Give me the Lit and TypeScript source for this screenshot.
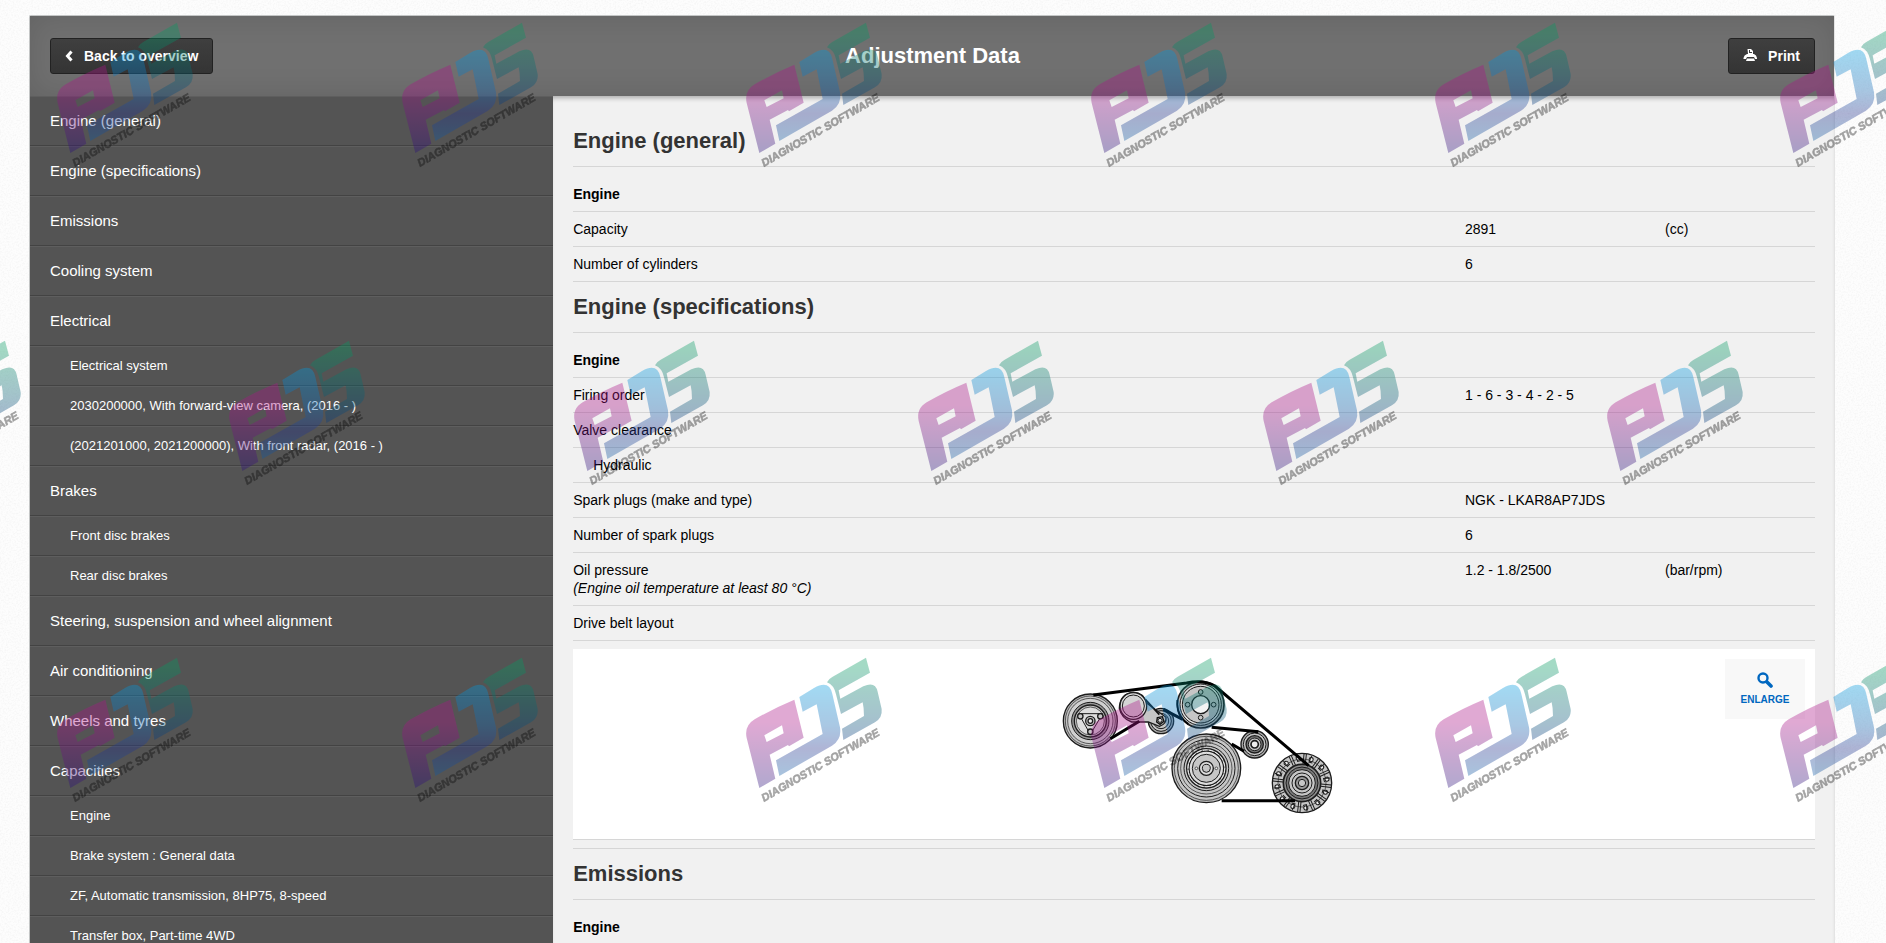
import { LitElement, html, svg, css } from "lit";
import { customElement } from "lit/decorators.js";

type Row = { label: string; value?: string; unit?: string; note?: string; indent?: boolean };

const NAV: { label: string; children?: string[] }[] = [
  { label: "Engine (general)" },
  { label: "Engine (specifications)" },
  { label: "Emissions" },
  { label: "Cooling system" },
  {
    label: "Electrical",
    children: [
      "Electrical system",
      "2030200000, With forward-view camera, (2016 - )",
      "(2021201000, 2021200000), With front radar, (2016 - )",
    ],
  },
  { label: "Brakes", children: ["Front disc brakes", "Rear disc brakes"] },
  { label: "Steering, suspension and wheel alignment" },
  { label: "Air conditioning" },
  { label: "Wheels and tyres" },
  {
    label: "Capacities",
    children: [
      "Engine",
      "Brake system : General data",
      "ZF, Automatic transmission, 8HP75, 8-speed",
      "Transfer box, Part-time 4WD",
    ],
  },
];

const GENERAL: Row[] = [
  { label: "Capacity", value: "2891", unit: "(cc)" },
  { label: "Number of cylinders", value: "6" },
];

const SPECS: Row[] = [
  { label: "Firing order", value: "1 - 6 - 3 - 4 - 2 - 5" },
  { label: "Valve clearance" },
  { label: "Hydraulic", indent: true },
  { label: "Spark plugs (make and type)", value: "NGK - LKAR8AP7JDS" },
  { label: "Number of spark plugs", value: "6" },
  { label: "Oil pressure", value: "1.2 - 1.8/2500", unit: "(bar/rpm)", note: "(Engine oil temperature at least 80 °C)" },
  { label: "Drive belt layout" },
];

@customElement("brand-watermark")
class BrandWatermark extends LitElement {
  static styles = css`
    :host {
      position: absolute;
      inset: 0;
      overflow: hidden;
      pointer-events: none;
    }
    .canvas {
      display: block;
      width: 100%;
      height: 100%;
      opacity: 0.36;
    }
    .tagline {
      font: italic bold 11px "Liberation Sans", Arial, sans-serif;
      stroke: #000;
      stroke-width: 0.6px;
    }
  `;

  render() {
    const marks = [0, 1, 2].flatMap((row) =>
      [0, 1, 2, 3, 4, 5].map((col) => ({
        x: Math.round(57 + (col - (row % 2) / 2) * 344.5),
        y: Math.round(23 + row * 317.5),
      })),
    );
    return html`<svg class="canvas" aria-hidden="true">
      <defs>
        <linearGradient id="p" x2="0" y2="1"><stop offset=".25" stop-color="#ac1488"/><stop offset="1" stop-color="#28107a"/></linearGradient>
        <linearGradient id="d" x2="0" y2="1"><stop stop-color="#009be0"/><stop offset=".45" stop-color="#1468b4"/><stop offset=".7" stop-color="#24348e"/><stop offset="1" stop-color="#105ca4"/></linearGradient>
        <linearGradient id="s" x2="0" y2="1"><stop offset=".1" stop-color="#069b62"/><stop offset="1" stop-color="#0a3c80"/></linearGradient>
      </defs>
      ${marks.map(
        (m) => svg`<g transform="translate(${m.x} ${m.y})">
          <g transform="scale(.3333) translate(-50 -56)">
            <path fill="url(#p)" fill-rule="evenodd" d="M195 181L223 295L179 321L176 317L121 346L138 418L90 446L52 296Q44 259 76 240Q130 208 195 181ZM105 288L112 308L163 282L158 258Z"/>
            <path fill="url(#d)" d="M210 173L254 146Q300 120 309 164L332 264Q338 300 308 319L150 410L140 363L280 284L262 195L220 217Z"/>
            <path fill="url(#s)" d="M293 129Q298 118 310 112L410 55L422 100L328 153L333 178L402 141Q438 124 445 157L457 209Q460 235 437 249L342 302L338 268L404 230Q404 205 400 189L335 224L320 165Q314 137 293 129Z"/>
          </g>
          <text class="tagline" transform="translate(18 144) rotate(-30)">DIAGNOSTIC SOFTWARE</text>
        </g>`,
      )}
    </svg>`;
  }
}

@customElement("belt-diagram")
class BeltDiagram extends LitElement {
  static styles = css`
    :host {
      display: block;
    }
    .drawing {
      display: block;
      width: 320px;
      height: 190px;
    }
  `;

  ring(cx: number, cy: number, rings: [number, string, number][]) {
    return rings.map(
      ([r, fill, w]) => svg`<circle cx=${cx} cy=${cy} r=${r} fill=${fill} stroke="#1c1c1c" stroke-width=${w}/>`,
    );
  }

  render() {
    const g = "#c6c6c6";
    const spokes = Array.from({ length: 12 }, (_, i) => i * 30 + 6);
    return html`<svg class="drawing" viewBox="-18 27 960 570" role="img" aria-label="Drive belt layout">
      ${this.ring(786, 429, [[89, g, 4], [72, g, 2]])}
      ${spokes.map(
        (a) => svg`<g transform="rotate(${a} 786 429)" stroke="#1c1c1c" stroke-width="3" fill="#eee">
          <path d="M783 341V372M790 341V372"/><circle cx="806" cy="356" r="6"/><path d="M762 346L766 366L776 362" fill="none"/></g>`,
      )}
      ${this.ring(786, 429, [[56, "#8e8e8e", 5], [48, "#777", 3], [40, g, 3], [30, g, 3], [20, "#999", 4], [11, g, 3]])}
      ${this.ring(499, 385, [[103, "#bbb", 4], [96, g, 2], [86, g, 3], [77, g, 2], [67, g, 3], [59, g, 4], [52, "#ddd", 4], [42, g, 3], [21, "#ddd", 4], [12, g, 3]])}
      <circle cx="499" cy="385" r="55" fill="none" stroke="#eee" stroke-width="3" stroke-dasharray="14 5"/>
      ${this.ring(469, 385, [[4, "#eee", 2]])}${this.ring(529, 385, [[4, "#eee", 2]])}
      ${this.ring(644, 313, [[41, "#aaa", 4], [34, g, 3], [26, "#777", 4], [19, g, 3], [11, "#eee", 5]])}
      ${this.ring(363, 243, [[38, "#aaa", 4], [31, g, 3], [23, g, 3]])}
      <path d="M238 205Q240 160 280 157Q312 158 318 188L378 232Q380 252 358 259L325 246H275Q245 236 238 205Z" fill=${g} stroke="#1c1c1c" stroke-width="4"/>
      <path d="M316 178L358 224" stroke="#111" stroke-width="5"/>
      ${this.ring(280, 198, [[40, "#ddd", 4], [33, "#d4d4d4", 3]])}
      <path d="M352 233L367 230L372 244L360 253L350 246Z" fill="#aaa" stroke="#111" stroke-width="4"/>
      ${this.ring(360, 241, [[6, "#ddd", 3]])}
      ${this.ring(151, 243, [[81, "#bbb", 4], [75, g, 2], [68, "#d0d0d0", 2], [56, "#999", 3], [48, g, 4], [42, "#ddd", 2]])}
      <path d="M116 221H188L151 283Z" fill="#ddd" stroke="#1c1c1c" stroke-width="3"/>
      ${this.ring(121, 229, [[8, g, 4]])}${this.ring(181, 229, [[8, g, 4]])}${this.ring(151, 275, [[8, g, 4]])}
      ${this.ring(151, 243, [[14, g, 4], [7, "#eee", 4]])}
      ${this.ring(482, 194, [[70, "#bbb", 5], [62, "#ddd", 3], [55, g, 3], [27, "#f3f3f3", 4]])}
      ${this.ring(482, 156, [[7, g, 3]])}${this.ring(482, 233, [[7, g, 3]])}${this.ring(443, 194, [[7, g, 3]])}${this.ring(521, 194, [[7, g, 3]])}
      <path d="M160 165L440 129Q490 118 525 138L806 377M370 208L428 238M515 262L655 275M575 312L612 334M545 482H765M211 296L298 244" fill="none" stroke="#000" stroke-width="9"/>
      <path d="M412 180Q408 226 445 252" fill="none" stroke="#000" stroke-width="5"/>
    </svg>`;
  }
}

@customElement("app-root")
class AppRoot extends LitElement {
  static styles = css`
    :host {
      display: block;
      position: relative;
      box-sizing: border-box;
      height: 100vh;
      overflow: hidden;
      padding: 15px 51px 0 29px;
      background: #fdfdfd;
      font: 14px/18px "Liberation Sans", Arial, sans-serif;
      color: #000;
    }
    .grain {
      position: absolute;
      inset: 0;
      width: 100%;
      height: 100%;
    }
    .shell {
      position: relative;
      border: 1px solid #c4c6c6;
      border-right-color: #e4e4e4;
      background: #f1f1f1;
      border-radius: 2px 2px 0 0;
    }
    .bar {
      position: relative;
      display: grid;
      grid-template-columns: 1fr auto 1fr;
      align-items: center;
      height: 80px;
      padding: 0 19px 0 20px;
      box-sizing: border-box;
      background: #707070;
      box-shadow: inset 0 0 30px rgba(0, 0, 0, 0.12);
    }
    .title {
      margin: 0;
      font-size: 22px;
      line-height: 28px;
      color: #fff;
    }
    .btn {
      display: flex;
      align-items: center;
      gap: 10px;
      height: 36px;
      padding: 0 14px;
      border: 1px solid #222;
      border-radius: 3px;
      background: linear-gradient(#3f3f3f, #343434);
      color: #fff;
      font: bold 14px/18px "Liberation Sans", Arial, sans-serif;
      justify-self: start;
    }
    .btn.print {
      justify-self: end;
    }
    .body {
      display: grid;
      grid-template-columns: 29% 1fr;
    }
    .nav {
      background: #545454;
    }
    .list {
      margin: 0;
      padding: 0;
      list-style: none;
    }
    .link {
      display: block;
      box-sizing: border-box;
      height: 50px;
      padding: 0 20px;
      border-top: 1px solid #5e5e5e;
      border-bottom: 1px solid #434343;
      color: #fff;
      font-size: 15px;
      line-height: 48px;
      text-decoration: none;
    }
    .link.sub {
      height: 40px;
      padding-left: 40px;
      font-size: 13px;
      line-height: 38px;
    }
    .content {
      padding: 20px 19px 0 20px;
      box-shadow: inset 0 5px 5px -3px rgba(0, 0, 0, 0.3);
    }
    .heading {
      margin: 0;
      padding: 11px 0;
      border-bottom: 1px solid #d6d6d6;
      font-size: 22px;
      line-height: 28px;
      color: #333;
    }
    .data {
      width: 100%;
      table-layout: fixed;
      border-collapse: separate;
      border-spacing: 0;
    }
    .value,
    .unit {
      width: 200px;
    }
    .unit {
      width: 150px;
    }
    .cell {
      padding: 8px 0;
      border-bottom: 1px solid #d6d6d6;
      text-align: left;
      vertical-align: top;
      font-weight: normal;
    }
    .cell.group {
      padding: 18px 0 8px;
      font-weight: bold;
    }
    .cell.indent {
      padding-left: 20px;
    }
    .note {
      display: block;
      font-style: italic;
    }
    .figure {
      position: relative;
      display: flex;
      justify-content: center;
      border-bottom: 1px solid #d6d6d6;
      background: #fff;
    }
    .enlarge {
      position: absolute;
      top: 10px;
      right: 10px;
      display: flex;
      flex-direction: column;
      align-items: center;
      justify-content: center;
      gap: 6px;
      width: 80px;
      height: 60px;
      padding: 0;
      border: 0;
      background: #f8f8f8;
      color: #0067c0;
      font: bold 10px/12px "Liberation Sans", Arial, sans-serif;
    }
  `;

  cells(r: Row) {
    return html`<tr>
      <th scope="row" class="cell ${r.indent ? "indent" : ""}">${r.label}${r.note ? html`<span class="note">${r.note}</span>` : ""}</th>
      <td class="cell">${r.value ?? ""}</td>
      <td class="cell">${r.unit ?? ""}</td>
    </tr>`;
  }

  section(id: string, title: string, rows: Row[], figure: unknown = "") {
    return html`<section id=${id}>
      <h2 class="heading">${title}</h2>
      <table class="data" aria-label=${title}>
        <colgroup><col /><col class="value" /><col class="unit" /></colgroup>
        <tbody>
          <tr><th class="cell group" colspan="3">Engine</th></tr>
          ${rows.map((r) => this.cells(r))} ${figure}
        </tbody>
      </table>
    </section>`;
  }

  render() {
    const figure = html`<tr>
      <td class="cell" colspan="3">
        <div class="figure">
          <belt-diagram></belt-diagram>
          <button class="enlarge" type="button">
            <svg width="16" height="16" viewBox="0 0 16 16" fill="none" stroke="#0067c0" aria-hidden="true">
              <circle cx="6" cy="6" r="4.5" stroke-width="2.4" />
              <path d="M10 10L14 14" stroke-width="3.6" stroke-linecap="round" />
            </svg>
            ENLARGE
          </button>
        </div>
      </td>
    </tr>`;
    return html`
      <svg class="grain" aria-hidden="true">
        <filter id="noise"><feTurbulence type="fractalNoise" baseFrequency=".6" numOctaves="2" /><feColorMatrix values="0 0 0 0 .8  0 0 0 0 .8  0 0 0 0 .8  .8 0 0 0 -.33" /></filter>
        <rect width="100%" height="100%" filter="url(#noise)" />
      </svg>
      <div class="shell">
        <header class="bar">
          <button class="btn" type="button">
            <svg width="9" height="12" viewBox="0 0 9 12" aria-hidden="true"><path d="M6.5 1.5L2.5 6L6.5 10.5" fill="none" stroke="#fff" stroke-width="3" /></svg>
            Back to overview
          </button>
          <h1 class="title">Adjustment Data</h1>
          <button class="btn print" type="button">
            <svg width="15" height="14" viewBox="0 0 15 14" fill="#fff" aria-hidden="true">
              <path d="M4.500 0H8L10 2V5H5ZM6 1V4H9V3H7V1Z" fill-rule="evenodd" />
              <path d="M4 5H11Q13.500 6 14 9V10H12L11 8H4L3 10H0.500V9Q1 6 4 5Z" />
              <path d="M4 9.500H11L12 12H3Z" />
            </svg>
            Print
          </button>
        </header>
        <div class="body">
          <nav class="nav" aria-label="Sections">
            <ul class="list">
              ${NAV.map(
                (n) => html`<li>
                  <a class="link" href="#">${n.label}</a>
                  ${n.children
                    ? html`<ul class="list">
                        ${n.children.map((c) => html`<li><a class="link sub" href="#">${c}</a></li>`)}
                      </ul>`
                    : ""}
                </li>`,
              )}
            </ul>
          </nav>
          <main class="content">
            ${this.section("general", "Engine (general)", GENERAL)}
            ${this.section("specifications", "Engine (specifications)", SPECS, figure)}
            ${this.section("emissions", "Emissions", [])}
          </main>
        </div>
      </div>
      <brand-watermark></brand-watermark>
    `;
  }
}
